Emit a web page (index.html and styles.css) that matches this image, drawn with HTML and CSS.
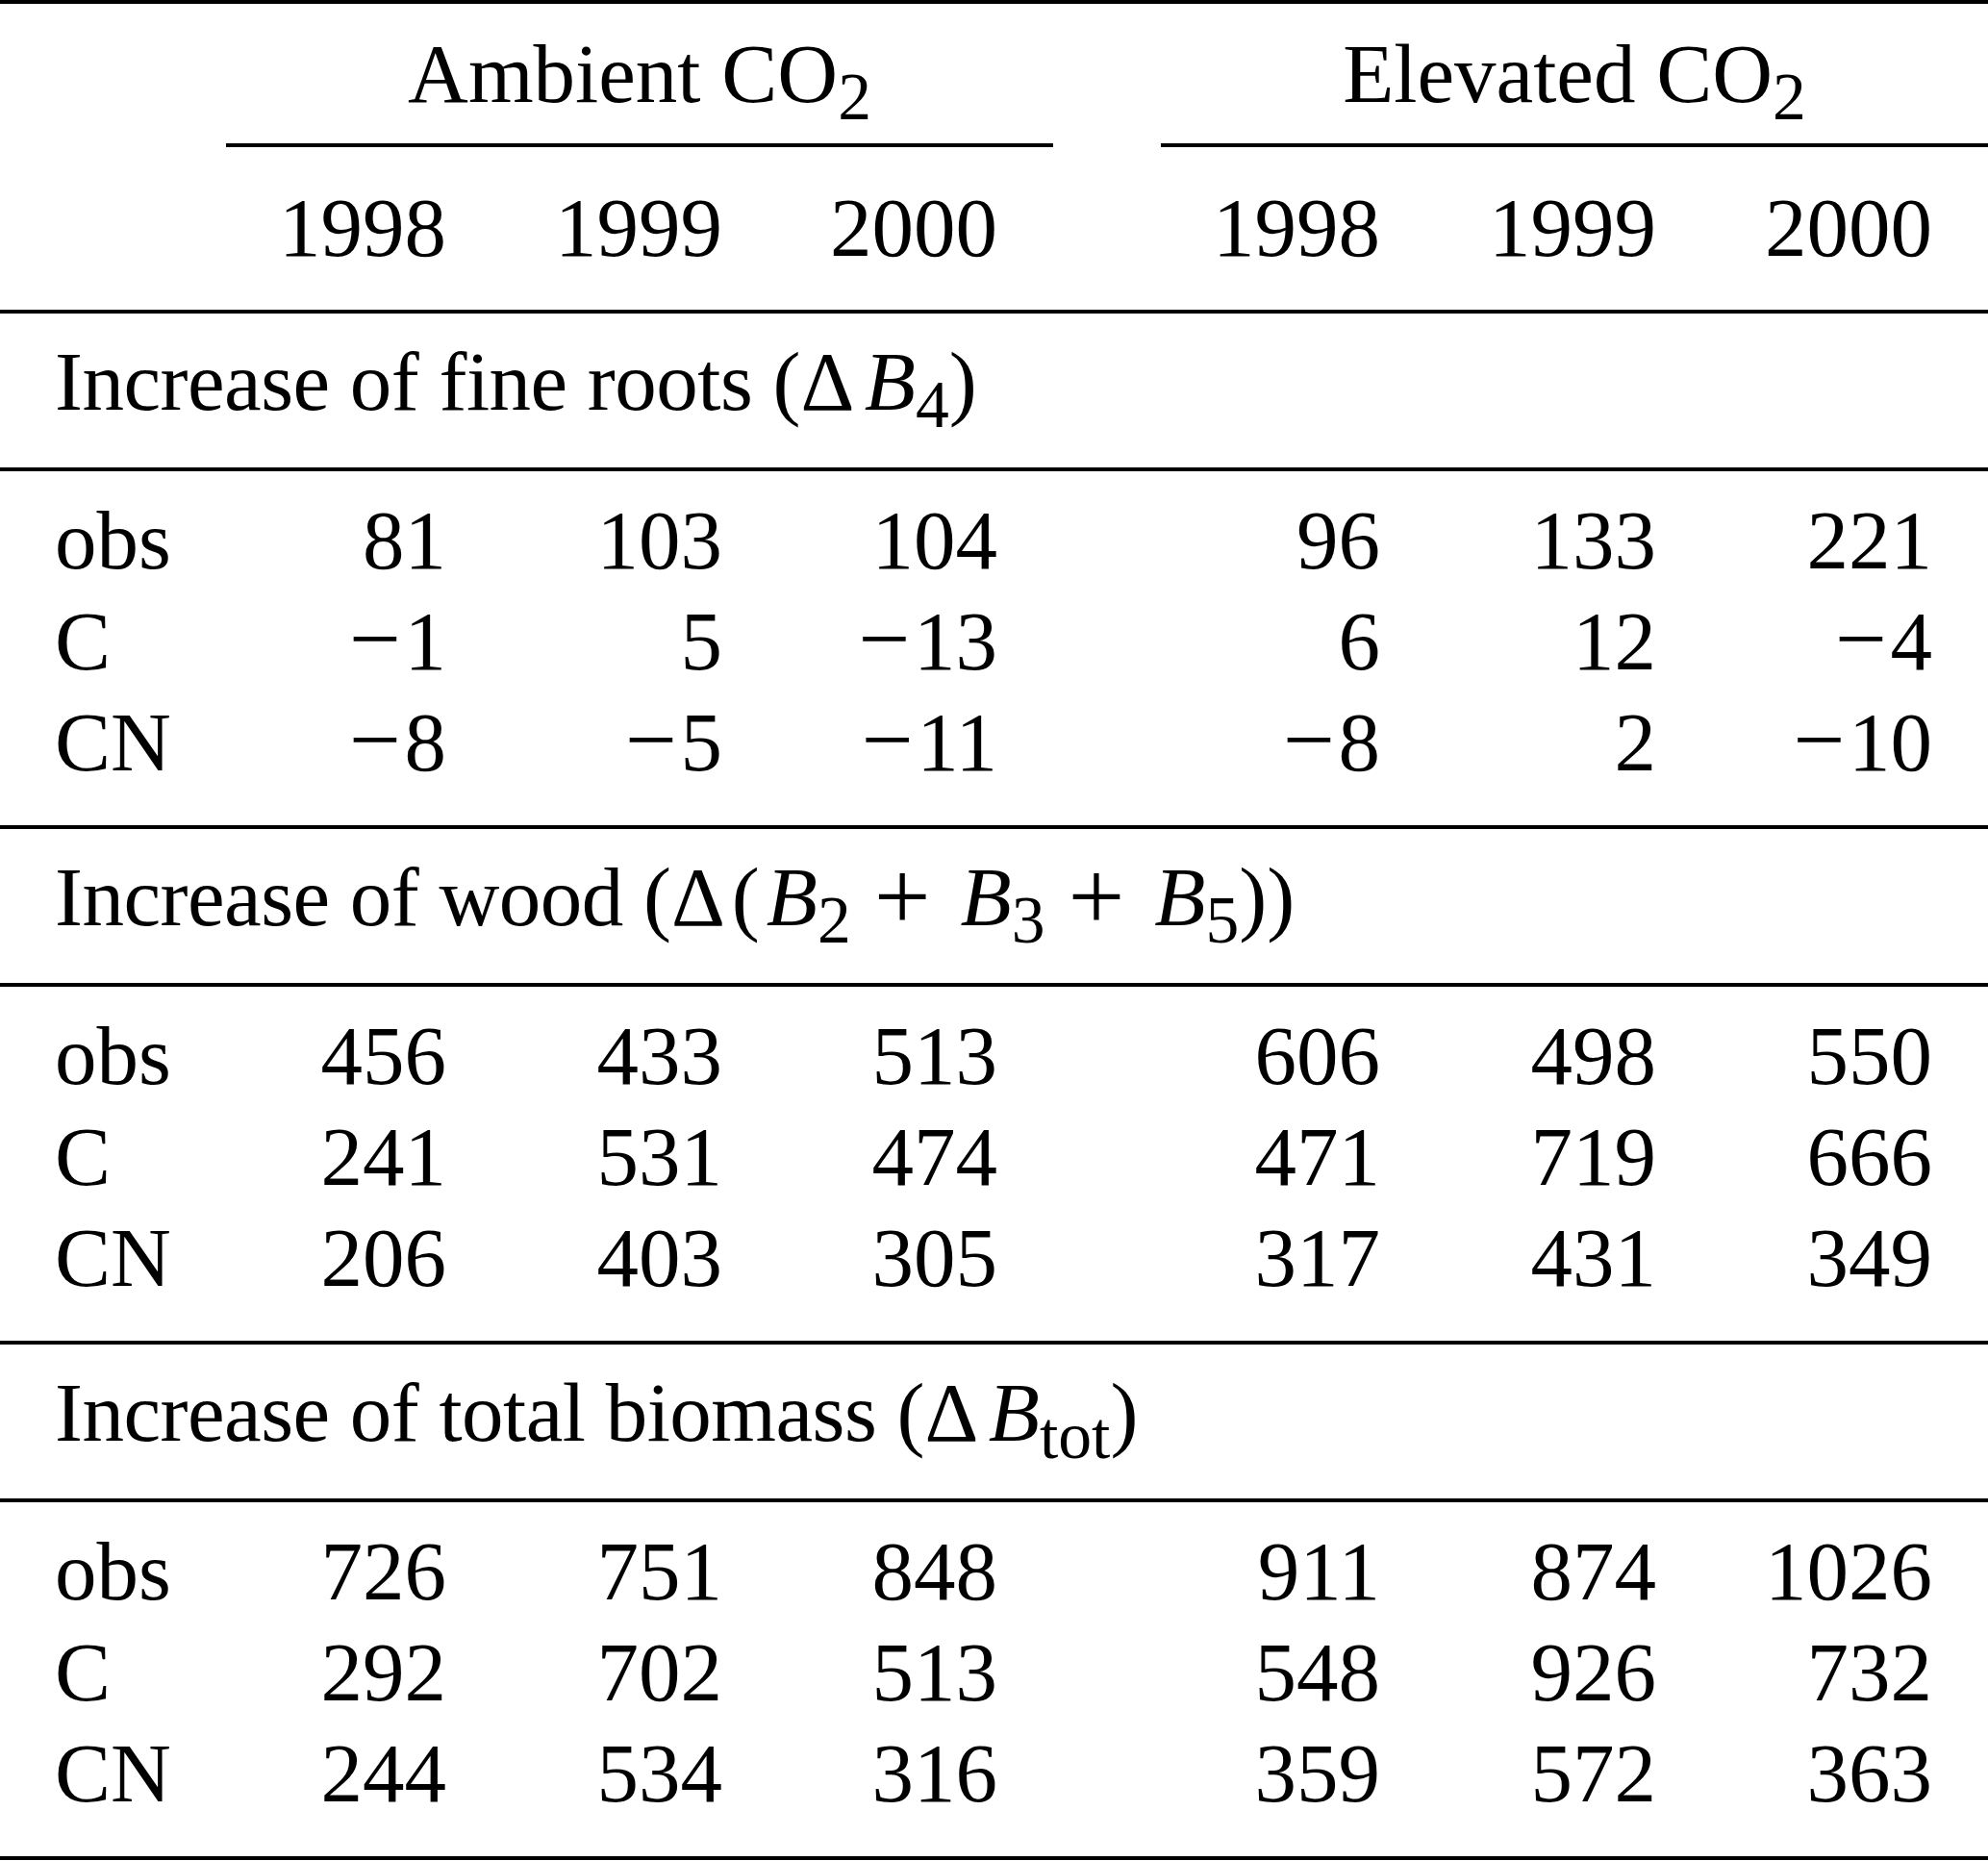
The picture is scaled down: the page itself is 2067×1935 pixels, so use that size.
FILE: index.html
```html
<!DOCTYPE html>
<html lang="en">
<head>
<meta charset="utf-8">
<title>Biomass increase table</title>
<link rel="stylesheet" href="styles.css">
</head>
<body>
<div class="tbl">
  <div class="head">
    <div class="row">
      <span class="grp grp-a">Ambient CO<span class="sub">2</span></span>
      <span class="grp grp-e">Elevated CO<span class="sub">2</span></span>
    </div>
    <div class="row cmid">
      <span class="cm cm-a"></span>
      <span class="cm cm-e"></span>
    </div>
    <div class="row">
      <span></span>
      <span class="c">1998</span><span class="c">1999</span><span class="c">2000</span>
      <span></span>
      <span class="c">1998</span><span class="c">1999</span><span class="c">2000</span>
    </div>
  </div>

  <div class="section"><span class="txt">Increase of fine roots </span>(<span class="dl">Δ</span><i>B</i><span class="sub">4</span>)</div>
  <div class="data">
    <div class="row"><span class="l">obs</span><span class="c">81</span><span class="c">103</span><span class="c">104</span><span></span><span class="c">96</span><span class="c">133</span><span class="c">221</span></div>
    <div class="row"><span class="l">C</span><span class="c"><span class="mn">−</span>1</span><span class="c">5</span><span class="c"><span class="mn">−</span>13</span><span></span><span class="c">6</span><span class="c">12</span><span class="c"><span class="mn">−</span>4</span></div>
    <div class="row"><span class="l">CN</span><span class="c"><span class="mn">−</span>8</span><span class="c"><span class="mn">−</span>5</span><span class="c"><span class="mn">−</span>11</span><span></span><span class="c"><span class="mn">−</span>8</span><span class="c">2</span><span class="c"><span class="mn">−</span>10</span></div>
  </div>

  <div class="section"><span class="txt">Increase of wood </span>(<span class="dw">Δ</span>(<i>B</i><span class="sub">2</span><span class="pl">+</span><i>B</i><span class="sub">3</span><span class="pl">+</span><i>B</i><span class="sub">5</span>))</div>
  <div class="data">
    <div class="row"><span class="l">obs</span><span class="c">456</span><span class="c">433</span><span class="c">513</span><span></span><span class="c">606</span><span class="c">498</span><span class="c">550</span></div>
    <div class="row"><span class="l">C</span><span class="c">241</span><span class="c">531</span><span class="c">474</span><span></span><span class="c">471</span><span class="c">719</span><span class="c">666</span></div>
    <div class="row"><span class="l">CN</span><span class="c">206</span><span class="c">403</span><span class="c">305</span><span></span><span class="c">317</span><span class="c">431</span><span class="c">349</span></div>
  </div>

  <div class="section"><span class="txt">Increase of total biomass </span>(<span class="dl">Δ</span><i>B</i><span class="sub">tot</span>)</div>
  <div class="data">
    <div class="row"><span class="l">obs</span><span class="c">726</span><span class="c">751</span><span class="c">848</span><span></span><span class="c">911</span><span class="c">874</span><span class="c">1026</span></div>
    <div class="row"><span class="l">C</span><span class="c">292</span><span class="c">702</span><span class="c">513</span><span></span><span class="c">548</span><span class="c">926</span><span class="c">732</span></div>
    <div class="row"><span class="l">CN</span><span class="c">244</span><span class="c">534</span><span class="c">316</span><span></span><span class="c">359</span><span class="c">572</span><span class="c">363</span></div>
  </div>
</div>
</body>
</html>
```

FILE: styles.css
```css
html, body {
  margin: 0;
  padding: 0;
  background: #fff;
}

body {
  font-family: "Liberation Serif", "Times New Roman", serif;
  font-size: 87px;
  line-height: 105px;
  color: #000;
}

.tbl {
  width: 2067px;
}

.row {
  display: grid;
  grid-template-columns: 235px 287px 287px 286px 112px 286px 287px 287px;
  height: 105px;
  white-space: nowrap;
}

.head {
  border-top: 4px solid #000;
  border-bottom: 4px solid #000;
  padding: 20px 0 33px;
}

.grp {
  text-align: center;
}
.grp-a { grid-column: 2 / 5; }
.grp-e { grid-column: 6 / 9; }

.row.cmid {
  height: 4px;
  margin: 20px 0 31px;
}
.cm {
  background: #000;
  height: 4px;
}
.cm-a { grid-column: 2 / 5; }
.cm-e { grid-column: 6 / 9; }

.section {
  padding: 18px 0 37px 57px;
  height: 105px;
  border-bottom: 4px solid #000;
  white-space: nowrap;
}

.txt {
  letter-spacing: -0.006em;
}

.data {
  padding: 19px 0 34px;
  border-bottom: 4px solid #000;
}

.l {
  padding-left: 57px;
}

.c {
  text-align: right;
  padding-right: 58px;
}

.sub {
  font-size: 0.8em;
  line-height: 0;
  vertical-align: -0.26em;
}

i {
  font-style: italic;
  margin-left: 0.08em;
}

.dl {
  margin-right: 0.04em;
}

.dw {
  margin-right: 0.08em;
}

.pl {
  font-size: 1.2em;
  line-height: 0;
  vertical-align: -0.05em;
  margin: 0 0.23em;
}

.mn {
  font-size: 1.1em;
  line-height: 0;
  margin-right: 0.04em;
}
```
